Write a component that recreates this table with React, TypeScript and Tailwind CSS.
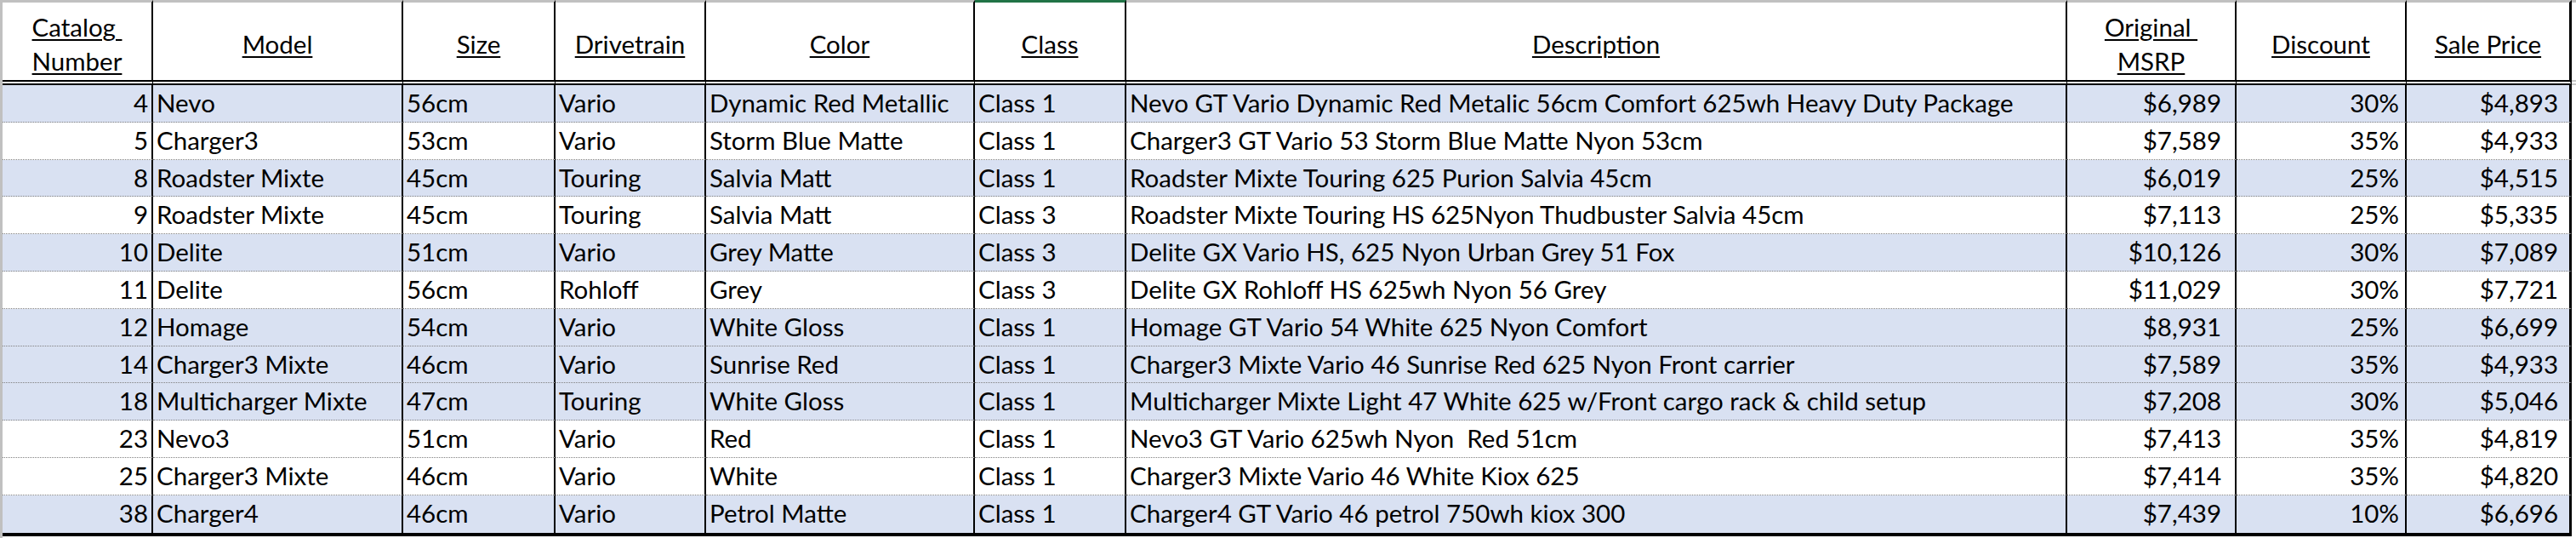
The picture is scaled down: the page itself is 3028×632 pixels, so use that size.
const rows = [
  ["4", "Nevo", "56cm", "Vario", "Dynamic Red Metallic", "Class 1", "Nevo GT Vario Dynamic Red Metalic 56cm Comfort 625wh Heavy Duty Package", "$6,989", "30%", "$4,893"],
  ["5", "Charger3", "53cm", "Vario", "Storm Blue Matte", "Class 1", "Charger3 GT Vario 53 Storm Blue Matte Nyon 53cm", "$7,589", "35%", "$4,933"],
  ["8", "Roadster Mixte", "45cm", "Touring", "Salvia Matt", "Class 1", "Roadster Mixte Touring 625 Purion Salvia 45cm", "$6,019", "25%", "$4,515"],
  ["9", "Roadster Mixte", "45cm", "Touring", "Salvia Matt", "Class 3", "Roadster Mixte Touring HS 625Nyon Thudbuster Salvia 45cm", "$7,113", "25%", "$5,335"],
  ["10", "Delite", "51cm", "Vario", "Grey Matte", "Class 3", "Delite GX Vario HS, 625 Nyon Urban Grey 51 Fox", "$10,126", "30%", "$7,089"],
  ["11", "Delite", "56cm", "Rohloff", "Grey", "Class 3", "Delite GX Rohloff HS 625wh Nyon 56 Grey", "$11,029", "30%", "$7,721"],
  ["12", "Homage", "54cm", "Vario", "White Gloss", "Class 1", "Homage GT Vario 54 White 625 Nyon Comfort", "$8,931", "25%", "$6,699"],
  ["14", "Charger3 Mixte", "46cm", "Vario", "Sunrise Red", "Class 1", "Charger3 Mixte Vario 46 Sunrise Red 625 Nyon Front carrier", "$7,589", "35%", "$4,933"],
  ["18", "Multicharger Mixte", "47cm", "Touring", "White Gloss", "Class 1", "Multicharger Mixte Light 47 White 625 w/Front cargo rack & child setup", "$7,208", "30%", "$5,046"],
  ["23", "Nevo3", "51cm", "Vario", "Red", "Class 1", "Nevo3 GT Vario 625wh Nyon  Red 51cm", "$7,413", "35%", "$4,819"],
  ["25", "Charger3 Mixte", "46cm", "Vario", "White", "Class 1", "Charger3 Mixte Vario 46 White Kiox 625", "$7,414", "35%", "$4,820"],
  ["38", "Charger4", "46cm", "Vario", "Petrol Matte", "Class 1", "Charger4 GT Vario 46 petrol 750wh kiox 300", "$7,439", "10%", "$6,696"],
];

// blue banded rows (by catalog number)
const blue = ["4", "8", "10", "12", "14", "18", "38"];

const headers: string[][] = [
  ["Catalog\u00a0", "Number"],
  ["Model"],
  ["Size"],
  ["Drivetrain"],
  ["Color"],
  ["Class"],
  ["Description"],
  ["Original\u00a0", "MSRP"],
  ["Discount"],
  ["Sale Price"],
];

// text alignment per column
const align = [
  "justify-end pr-[4px]",
  "pl-[4px]",
  "pl-[4px]",
  "pl-[4px]",
  "pl-[4px]",
  "pl-[4px]",
  "pl-[4px]",
  "justify-end pr-[16px]",
  "justify-end pr-[7px]",
  "justify-end pr-[13px]",
];

const App = () => {
  return (
    <div className="flex w-full h-[632px] bg-white font-['Lato',sans-serif] text-[29.5px] text-black border-l-[3px] border-l-[#c0c0c0]">
      <div className="flex flex-col">
        {/* Header */}
        <div className="grid grid-cols-[177px_294px_179px_177px_316px_178px_1106px_199px_200px_194px]">
          {headers.map((h, i) => (
            <div
              key={i}
              className={`h-[100px] flex items-center justify-center text-center pt-[6px] leading-[40px] border-r-2 border-r-black border-b-[6px] border-b-black [border-bottom-style:double] border-t-[3px] ${
                i === 5 ? "border-t-[#217346]" : "border-t-[#c0c0c0]"
              } ${i === 9 ? "border-r-[3px]" : ""}`}
            >
              <span>
                {h.map((line, j) => (
                  <span key={j} className="block underline decoration-2 underline-offset-3 whitespace-pre">
                    {line}
                  </span>
                ))}
              </span>
            </div>
          ))}
        </div>

        {/* Rows */}
        <div className="border-b-4 border-b-black">
          {rows.map((r, ri) => (
            <div
              key={ri}
              className={`grid grid-cols-[177px_294px_179px_177px_316px_178px_1106px_199px_200px_194px] h-[43.8px] ${
                blue.includes(r[0]) ? "bg-[#d9e1f2]" : "bg-white"
              }`}
            >
              {r.map((c, ci) => (
                <div
                  key={ci}
                  className={`flex items-start overflow-hidden whitespace-pre leading-[42.8px] border-r-2 border-r-black ${
                    ci === 9 ? "border-r-[3px]" : ""
                  } ${ri < rows.length - 1 ? "border-b border-b-[#808080] [border-bottom-style:dotted]" : ""} ${align[ci]}`}
                >
                  {c}
                </div>
              ))}
            </div>
          ))}
        </div>
      </div>
      <div className="flex-1">
        <div className="h-[100px] border-t-[3px] border-t-[#c0c0c0] border-b-[6px] border-b-[#c8c8c8] [border-bottom-style:double]" />
      </div>
    </div>
  );
};

export default App;
